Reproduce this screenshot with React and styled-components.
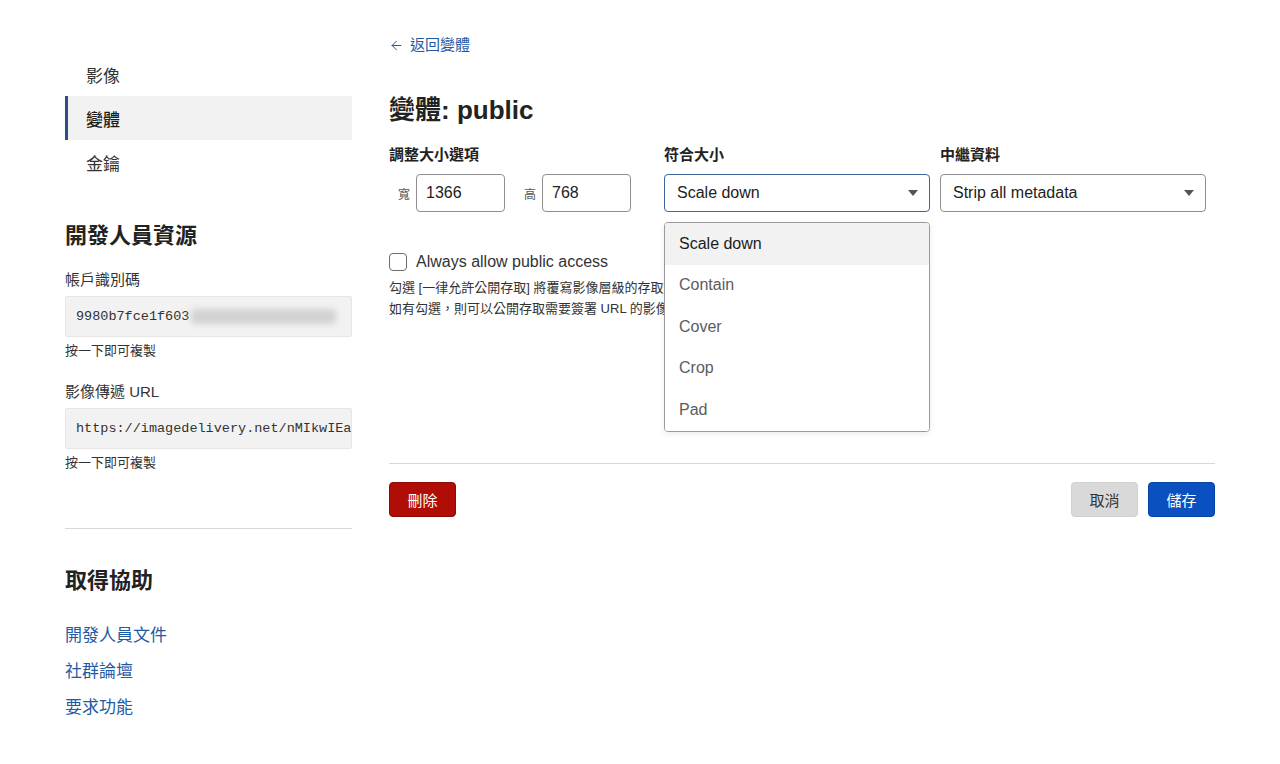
import React from 'react'
import styled, { createGlobalStyle } from 'styled-components'
import { ArrowLeft } from 'lucide-react'

const GlobalStyle = createGlobalStyle`
  body {
    margin: 0;
    background: #ffffff;
    color: #222;
    font-family: "Liberation Sans", "Noto Sans CJK TC", sans-serif;
  }
`

const navItems = [
  { key: 'images', label: '影像' },
  { key: 'variants', label: '變體', active: true },
  { key: 'keys', label: '金鑰' },
]

const fitOptions = ['Scale down', 'Contain', 'Cover', 'Crop', 'Pad']

const helpLinks = ['開發人員文件', '社群論壇', '要求功能']

function Caret() {
  return (
    <svg width="10" height="6" viewBox="0 0 10 6">
      <path d="M0 0 L10 0 L5 6 Z" fill="#555" />
    </svg>
  )
}

export default function App() {
  return (
    <>
      <GlobalStyle />
      <Page>
        <Sidebar>
          <Nav>
            {navItems.map((item) => (
              <NavItem key={item.key} $active={item.active}>
                {item.label}
              </NavItem>
            ))}
          </Nav>

          <SideHeading>開發人員資源</SideHeading>
          <FieldLabel>帳戶識別碼</FieldLabel>
          <CopyField>
            9980b7fce1f603
            <Blurred />
          </CopyField>
          <Hint>按一下即可複製</Hint>

          <FieldLabel $spaced>影像傳遞 URL</FieldLabel>
          <CopyField>https://imagedelivery.net/nMIkwIEa4tPzPBFw</CopyField>
          <Hint>按一下即可複製</Hint>

          <Divider $side />

          <SideHeading $help>取得協助</SideHeading>
          <LinkList>
            {helpLinks.map((l) => (
              <HelpLink key={l} href="#">{l}</HelpLink>
            ))}
          </LinkList>
        </Sidebar>

        <Main>
          <BackLink href="#">
            <ArrowLeft size={15} strokeWidth={1.6} />
            返回變體
          </BackLink>
          <Title>變體: public</Title>

          <OptionsGrid>
            <Column>
              <ColumnLabel>調整大小選項</ColumnLabel>
              <SizeRow>
                <SizeLabel>寬</SizeLabel>
                <NumberInput defaultValue="1366" />
                <SizeLabel $gap>高</SizeLabel>
                <NumberInput defaultValue="768" />
              </SizeRow>
            </Column>

            <Column>
              <ColumnLabel>符合大小</ColumnLabel>
              <SelectWrap>
                <Select $focused>
                  <span>Scale down</span>
                  <Caret />
                </Select>
                <Menu>
                  {fitOptions.map((o, i) => (
                    <MenuItem key={o} $selected={i === 0}>{o}</MenuItem>
                  ))}
                </Menu>
              </SelectWrap>
            </Column>

            <Column>
              <ColumnLabel>中繼資料</ColumnLabel>
              <Select>
                <span>Strip all metadata</span>
                <Caret />
              </Select>
            </Column>
          </OptionsGrid>

          <CheckRow>
            <Checkbox />
            <CheckText>Always allow public access</CheckText>
          </CheckRow>
          <HelpText>
            <div>勾選 [一律允許公開存取] 將覆寫影像層級的存取設定。</div>
            <div>如有勾選，則可以公開存取需要簽署 URL 的影像。</div>
          </HelpText>

          <Divider $main />

          <Actions>
            <Button $variant="danger">刪除</Button>
            <ButtonGroup>
              <Button $variant="neutral">取消</Button>
              <Button $variant="primary">儲存</Button>
            </ButtonGroup>
          </Actions>
        </Main>
      </Page>
    </>
  )
}

const Page = styled.div`
  display: flex;
  gap: 37px;
  padding-left: 65px;
  min-height: 764px;
  box-sizing: border-box;
`

const Sidebar = styled.aside`
  width: 287px;
  flex-shrink: 0;
  padding-top: 52px;
  display: flex;
  flex-direction: column;
`

const Nav = styled.nav`
  display: flex;
  flex-direction: column;
`

const NavItem = styled.div`
  height: 44px;
  display: flex;
  align-items: center;
  padding-left: 18px;
  font-size: 17px;
  color: ${(p) => (p.$active ? '#1c1c1c' : '#333')};
  font-weight: ${(p) => (p.$active ? 500 : 400)};
  background: ${(p) => (p.$active ? '#f2f2f2' : 'transparent')};
  border-left: 3px solid ${(p) => (p.$active ? '#2b4f86' : 'transparent')};
`

const SideHeading = styled.h2`
  margin: 37px 0 0;
  font-size: 22px;
  line-height: 30px;
  font-weight: 600;
  color: #222;
`

const FieldLabel = styled.div`
  margin-top: ${(p) => (p.$spaced ? '21px' : '18px')};
  font-size: 15px;
  line-height: 22px;
  color: #333;
`

const CopyField = styled.div`
  margin-top: 5px;
  height: 41px;
  box-sizing: border-box;
  display: flex;
  align-items: center;
  padding: 0 10px;
  background: #f2f2f2;
  border: 1px solid #e6e6e6;
  border-radius: 2px;
  font-family: "Liberation Mono", "DejaVu Sans Mono", monospace;
  font-size: 13.5px;
  color: #333;
  white-space: nowrap;
  overflow: hidden;
`

const Blurred = styled.span`
  display: inline-block;
  width: 145px;
  height: 15px;
  margin-left: 2px;
  background: #d2d2d2;
  border-radius: 4px;
  filter: blur(3px);
`

const Hint = styled.div`
  margin-top: 5px;
  font-size: 13px;
  line-height: 18px;
  color: #333;
`

const Divider = styled.hr`
  border: none;
  border-top: 1px solid #d9d9d9;
  margin: ${(p) => (p.$side ? '56px 0 0' : '144px 0 0')};
  width: 100%;
`

const LinkList = styled.div`
  margin-top: 28px;
  display: flex;
  flex-direction: column;
  gap: 12px;
`

const HelpLink = styled.a`
  font-size: 17px;
  line-height: 24px;
  color: #1f5aa6;
  text-decoration: none;
`

const Main = styled.main`
  width: 826px;
  padding-top: 34px;
  display: flex;
  flex-direction: column;
`

const BackLink = styled.a`
  display: inline-flex;
  align-items: center;
  gap: 6px;
  font-size: 15px;
  line-height: 22px;
  color: #1f5aa6;
  text-decoration: none;
  align-self: flex-start;
`

const Title = styled.h1`
  margin: 37px 0 0;
  font-size: 26px;
  line-height: 34px;
  font-weight: 600;
  color: #222;
`

const OptionsGrid = styled.div`
  margin-top: 17px;
  display: grid;
  grid-template-columns: 265px 266px 266px;
  column-gap: 10px;
`

const Column = styled.div`
  display: flex;
  flex-direction: column;
  gap: 8px;
`

const ColumnLabel = styled.div`
  font-size: 15px;
  line-height: 22px;
  font-weight: 600;
  color: #222;
`

const SizeRow = styled.div`
  display: flex;
  align-items: center;
  padding-left: 9px;
`

const SizeLabel = styled.span`
  font-size: 12px;
  color: #555;
  margin-right: 6px;
  margin-left: ${(p) => (p.$gap ? '19px' : '0')};
`

const NumberInput = styled.input`
  width: 89px;
  height: 38px;
  box-sizing: border-box;
  border: 1px solid #8f8f8f;
  border-radius: 4px;
  padding: 0 9px;
  font-family: "Liberation Sans", "Noto Sans CJK TC", sans-serif;
  font-size: 16px;
  color: #222;
  outline: none;
`

const SelectWrap = styled.div`
  position: relative;
`

const Select = styled.div`
  height: 38px;
  box-sizing: border-box;
  display: flex;
  align-items: center;
  justify-content: space-between;
  padding: 0 11px 0 12px;
  border: 1px solid ${(p) => (p.$focused ? '#3f6699' : '#8f8f8f')};
  border-radius: 4px;
  font-size: 16px;
  color: #222;
  background: #fff;
`

const Menu = styled.div`
  position: absolute;
  top: calc(100% + 10px);
  left: 0;
  right: 0;
  background: #fff;
  border: 1px solid #9a9a9a;
  border-radius: 4px;
  overflow: hidden;
  box-shadow: 0 2px 6px rgba(0, 0, 0, 0.08);
  z-index: 10;
`

const MenuItem = styled.div`
  height: 41.5px;
  display: flex;
  align-items: center;
  padding-left: 14px;
  font-size: 16px;
  color: ${(p) => (p.$selected ? '#1c1c1c' : '#5c5c5c')};
  background: ${(p) => (p.$selected ? '#f2f2f2' : '#fff')};
`

const CheckRow = styled.label`
  margin-top: 39px;
  height: 22px;
  display: flex;
  align-items: center;
  gap: 9px;
`

const Checkbox = styled.span`
  width: 18px;
  height: 18px;
  box-sizing: border-box;
  border: 1.5px solid #6b6b6b;
  border-radius: 4px;
`

const CheckText = styled.span`
  font-size: 16px;
  color: #333;
`

const HelpText = styled.div`
  margin-top: 4px;
  font-size: 13px;
  line-height: 21px;
  color: #333;
`

const Actions = styled.div`
  margin-top: 18px;
  display: flex;
  justify-content: space-between;
`

const ButtonGroup = styled.div`
  display: flex;
  gap: 10px;
`

const buttonColors = {
  danger: { bg: '#b00d06', fg: '#fff', border: '#8f0a04' },
  neutral: { bg: '#d9d9d9', fg: '#333', border: '#d0d0d0' },
  primary: { bg: '#0a50c0', fg: '#fff', border: '#0644a6' },
}

const Button = styled.button`
  width: 67px;
  height: 35px;
  border-radius: 4px;
  border: 1px solid ${(p) => buttonColors[p.$variant].border};
  background: ${(p) => buttonColors[p.$variant].bg};
  color: ${(p) => buttonColors[p.$variant].fg};
  font-family: "Liberation Sans", "Noto Sans CJK TC", sans-serif;
  font-size: 15px;
  cursor: pointer;
`
